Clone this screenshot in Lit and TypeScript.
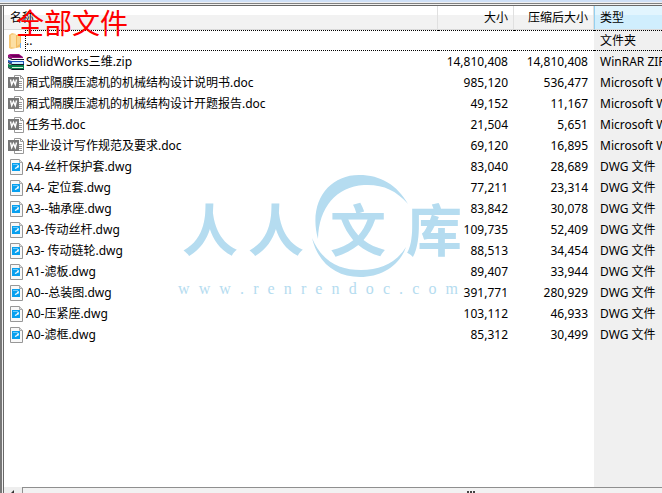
import { LitElement, html, css, svg } from "lit";
import { customElement, property } from "lit/decorators.js";

type Kind = "folder" | "zip" | "doc" | "dwg";
interface Entry { kind: Kind; name: string; size: string; packed: string; type: string }

const dwg = (name: string, size: string, packed: string): Entry =>
  ({ kind: "dwg", name, size, packed, type: "DWG 文件" });
const doc = (name: string, size: string, packed: string): Entry =>
  ({ kind: "doc", name, size, packed, type: "Microsoft Word 文档" });

const entries: Entry[] = [
  { kind: "folder", name: "..", size: "", packed: "", type: "文件夹" },
  { kind: "zip", name: "SolidWorks三维.zip", size: "14,810,408", packed: "14,810,408", type: "WinRAR ZIP 压缩文件" },
  doc("厢式隔膜压滤机的机械结构设计说明书.doc", "985,120", "536,477"),
  doc("厢式隔膜压滤机的机械结构设计开题报告.doc", "49,152", "11,167"),
  doc("任务书.doc", "21,504", "5,651"),
  doc("毕业设计写作规范及要求.doc", "69,120", "16,895"),
  dwg("A4-丝杆保护套.dwg", "83,040", "28,689"),
  dwg("A4- 定位套.dwg", "77,211", "23,314"),
  dwg("A3--轴承座.dwg", "83,842", "30,078"),
  dwg("A3-传动丝杆.dwg", "109,735", "52,409"),
  dwg("A3- 传动链轮.dwg", "88,513", "34,454"),
  dwg("A1-滤板.dwg", "89,407", "33,944"),
  dwg("A0--总装图.dwg", "391,771", "280,929"),
  dwg("A0-压紧座.dwg", "103,112", "46,933"),
  dwg("A0-滤框.dwg", "85,312", "30,499"),
];

const shapes = {
  folder: svg`
    <path d="M1 2l3-2 4 1v14l-5 1-2-1z" fill="#f6c878"/>
    <path d="M8 2l5-1v13l-5 1z" fill="#f3bd62"/>
    <path d="M3 2l5-1v14l-5-1z" fill="#fcdfa4"/>
    <path d="M9 3l3-1v9l-3 2z" fill="#fbd48c"/>
    <path d="M12.500 10v5" stroke="#69aef0"/>`,
  zip: svg`
    <path d="M0 1l2-1h9l4 3v2H4L0 3z" fill="#9b0b7c"/>
    <path d="M2 1h9l3 2H5z" fill="#6a0058"/>
    <path d="M4 4h11v1H4z" fill="#f6e3f0"/>
    <path d="M0 6l4 1h12v3H4L0 8z" fill="#1c55b8"/>
    <path d="M4 8h11v2H4z" fill="#c9eaff"/>
    <path d="M0 10l4 1h12v4H4l-4-2z" fill="#08804c"/>
    <path d="M4 13h11v1H4z" fill="#d5f4d8"/>
    <path d="M0 3.500l4 2h12M0 8.500l4 2h12M0 13.500l4 2h12" fill="none" stroke="#171428"/>`,
  doc: svg`
    <path d="M6.500.5h6l3 3v12h-9z" fill="#fff" stroke="#999"/>
    <path d="M12.500.5v3h3" fill="none" stroke="#999"/>
    <path d="M11 6.500h3M11 8.500h3M11 10.500h3M8 12.500h6" stroke="#999"/>
    <path d="M0 2h11v11H0z" fill="#777"/>
    <path d="M2.500 4.500l1.200 5 1.800-4 1.800 4 1.200-5" fill="none" stroke="#fff" stroke-width="1.400"/>`,
  dwg: svg`
    <path d="M2.500.5h9l3 3v12h-12z" fill="#f8f8f8" stroke="#979797"/>
    <path d="M11.500.5v3h3" fill="#ddd" stroke="#aaa"/>
    <path d="M4 4h8v8H4z" fill="#08a0ef"/>
    <path d="M5 5.500h5M10.500 6v3" fill="none" stroke="#6cc8fa"/>
    <path d="M7 9.500l2-1 1.500-2" fill="none" stroke="#fff" stroke-width="1.300"/>`,
};

@customElement("file-icon")
class FileIcon extends LitElement {
  @property() kind: Kind = "dwg";
  static styles = css`
    :host { display: block; flex: none; width: 16px; height: 16px; }
    svg { display: block; width: 16px; height: 16px; }
  `;
  render() {
    return html`<svg viewBox="0 0 16 16" aria-hidden="true">${shapes[this.kind]}</svg>`;
  }
}

@customElement("site-watermark")
class SiteWatermark extends LitElement {
  static styles = css`
    :host { display: block; width: 282px; color: #b5dcf0; pointer-events: none; }
    .brand { display: grid; grid-template-columns: 64px 68px 96px 54px; align-items: center; height: 104px; position: relative;
      font: 700 56px/72px "Noto Sans CJK SC", sans-serif; }
    .brand span { text-align: center; }
    .ring { position: absolute; left: 134px; top: 0; width: 98px; height: 104px; }
    .url { display: flex; justify-content: space-between; padding-right: 2px; font: 400 16px/20px "Liberation Serif", serif; }
  `;
  render() {
    return html`
      <div class="brand">
        <svg class="ring" viewBox="0 0 98 104" aria-hidden="true">
          <path d="M6 64C-4 28 16 0 47 0c22 0 38 10 49 29C84 15 70 9 52 10 24 12 7 32 6 64z" fill="currentColor"/>
          <path d="M0 63c10 24 28 32 49 32 20 0 36-8 45-23-6 18-24 30-46 30C24 102 6 88 0 63z" fill="currentColor"/>
        </svg>
        <span>人</span><span>人</span><span>文</span><span>库</span>
      </div>
      <div class="url">${[..."www.renrendoc.com"].map((c) => html`<span>${c}</span>`)}</div>`;
  }
}

@customElement("app-root")
class AppRoot extends LitElement {
  static styles = css`
    :host { display: flex; flex-direction: column; box-sizing: border-box; height: 100vh; min-height: 400px; overflow: hidden;
      position: relative; color: #000; background: #fff;
      font: 12px/20px "Noto Sans", "Noto Sans CJK SC", sans-serif; }
    .edge { flex: none; height: 6px; box-sizing: border-box; background: #f0f0f0;
      border-top: 2px solid #cfe0f7; border-bottom: 1px solid #696969; }
    .edge::before { content: ""; display: block; height: 1px; margin-top: 1px; background: #808080; }
    .pane { flex: 1; min-height: 0; display: flex; flex-direction: column; border-left: 1px solid #696969;
      margin-left: 3px; box-shadow: -1px 0 #f0f0f0, -3px 0 #777; }
    .list { flex: 1; min-height: 0; overflow: hidden;
      display: grid; grid-template-rows: auto 1fr; }
    table { width: 100%; table-layout: fixed; border-collapse: separate; border-spacing: 0; }
    .c-size { width: 76px; } .c-packed { width: 80px; } .c-type { width: 68px; }
    th, td { box-sizing: border-box; padding: 0 6px; white-space: nowrap; overflow: hidden; text-align: left; font-weight: 400; }
    th { height: 24px; background: linear-gradient(#fff 38%, #f2f2f2 38%); border-right: 1px solid #e0e0e0; border-bottom: 1px solid #d9d9d9; }
    th.num, td.num { text-align: right; }
    th.num { padding-right: 5px; }
    th.type { background: linear-gradient(#e2f5fe 38%, #d0eefd 38%); border-left: 1px solid #94d0f0; border-right: 0; padding-left: 5px; }
    td { height: 21px; }
    td.name { padding: 0; }
    td.type { background: #f0f0f0; padding-right: 0; }
    .file { display: flex; align-items: center; padding-left: 4px; }
    .label { padding-left: 2px; white-space: pre; }
    .focus td { line-height: 19px; border-top: 1px dotted #000; border-bottom: 1px dotted #000; }
    .focus td.name { border: 0; }
    .focus .label { flex: 1; margin-left: 1px; padding-left: 0; border: 1px dotted #000; border-right: 0; }
    .rest { display: flex; justify-content: flex-end; }
    .rest div { width: 68px; background: #f0f0f0; }
    .scroll { flex: none; display: flex; height: 6px; background: #eee; }
    .arrow { width: 18px; box-sizing: border-box; flex: none; }
    .arrow svg { display: block; }
    .thumb { flex: 1; box-sizing: border-box; border: 1px solid #8f8f8f; border-width: 1px 0 0 1px; background: #f2f2f2;
      display: flex; justify-content: center; padding: 3px 0 0 256px; }
    .thumb svg { display: block; }
    .caption { position: absolute; left: 16px; top: 6px; margin: 0; color: #f00;
      font: 400 28px/32px "Noto Sans CJK SC", sans-serif; }
    .mark { position: absolute; left: 178px; top: 175px; }
  `;
  render() {
    return html`
      <div class="edge"></div>
      <div class="pane">
        <div class="list">
          <table>
            <colgroup><col><col class="c-size"><col class="c-packed"><col class="c-type"></colgroup>
            <thead><tr><th>名称</th><th class="num">大小</th><th class="num">压缩后大小</th><th class="type">类型</th></tr></thead>
            <tbody>${entries.map((e) => html`
              <tr class=${e.kind === "folder" ? "focus" : ""}>
                <td class="name"><div class="file"><file-icon .kind=${e.kind}></file-icon><span class="label">${e.name}</span></div></td>
                <td class="num">${e.size}</td><td class="num">${e.packed}</td><td class="type">${e.type}</td>
              </tr>`)}</tbody>
          </table>
          <div class="rest"><div></div></div>
        </div>
        <div class="scroll">
          <div class="arrow"><svg width="18" height="6" aria-hidden="true"><path d="M7 6l3-3v3z" fill="#333"/></svg></div>
          <div class="thumb"><svg width="8" height="2" aria-hidden="true"><path d="M0 0h2v2H0zM3 0h2v2H3zM6 0h2v2H6z" fill="#444"/></svg></div>
        </div>
      </div>
      <site-watermark class="mark"></site-watermark>
      <h1 class="caption">全部文件</h1>`;
  }
}
